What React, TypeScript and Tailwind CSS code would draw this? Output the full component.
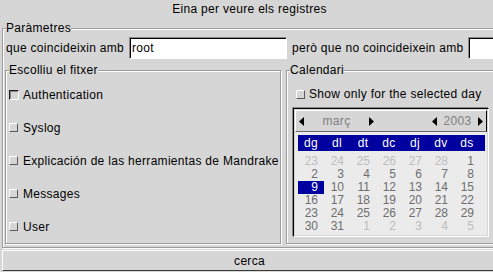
import React from 'react';

// Log viewer dialog: parameters, file choice and calendar

type Day = { n: number; other?: boolean };

const DAY_NAMES = ['dg', 'dl', 'dt', 'dc', 'dj', 'dv', 'ds'];

const range = (a: number, b: number, other = false): Day[] =>
  Array.from({ length: b - a + 1 }, (_, i) => ({ n: a + i, other }));

const WEEKS: Day[][] = [
  [...range(23, 28, true), ...range(1, 1)],
  range(2, 8),
  range(9, 15),
  range(16, 22),
  range(23, 29),
  [...range(30, 31), ...range(1, 5, true)],
];

const FILES = [
  { label: 'Authentication', on: true },
  { label: 'Syslog' },
  { label: 'Explicación de las herramientas de Mandrake' },
  { label: 'Messages' },
  { label: 'User' },
];

function Check({ on }: { on?: boolean }) {
  if (on) {
    return (
      <span className="block w-[10px] h-[10px] border border-t-[#1a1a1a] border-l-[#1a1a1a] border-b-white border-r-white bg-[#d6d6d6] shadow-[inset_1px_1px_0_#8a8a8a]" />
    );
  }
  return (
    <span className="block w-[9px] h-[9px] border border-t-white border-l-white border-b-[#5a5a5a] border-r-[#5a5a5a] bg-[#d6d6d6]" />
  );
}

function Arrow({ dir }: { dir: 'left' | 'right' }) {
  return (
    <svg width="5" height="9" viewBox="0 0 5 9" className="shrink-0">
      <polygon points={dir === 'left' ? '5,0 5,9 0,4.5' : '0,0 0,9 5,4.5'} fill="#000" />
    </svg>
  );
}

function Calendar() {
  return (
    <div className="w-[196px] h-[129px] p-px border border-t-black border-l-black border-b-white border-r-white shadow-[-1px_-1px_0_#8a8a8a] flex flex-col">
      {/* month / year bar */}
      <div className="h-[22px] shrink-0 flex items-center px-[3px] border border-t-white border-l-white border-b-[#6a6a6a] border-r-black">
        <Arrow dir="left" />
        <span className="w-[65px] text-center text-[#808080]">març</span>
        <Arrow dir="right" />
        <div className="flex-1" />
        <Arrow dir="left" />
        <span className="w-[41px] text-center text-[#808080]">2003</span>
        <Arrow dir="right" />
      </div>

      <div className="flex-1 bg-[#ebebeb] pt-[3px] pl-[3px] tracking-normal">
        <div className="w-[187px] h-[16px] bg-[#0000a0] text-white">
          <div className="grid grid-cols-[repeat(7,26px)] h-full items-center">
            {DAY_NAMES.map((d) => (
              <span key={d} className="text-center tracking-[0.3px]">{d}</span>
            ))}
          </div>
        </div>
        <div className="mt-[4px]">
          {WEEKS.map((week, w) => (
            <div key={w} className="grid grid-cols-[repeat(7,26px)]">
              {week.map((d, i) => {
                const selected = !d.other && d.n === 9;
                return (
                  <span
                    key={i}
                    className={
                      selected
                        ? 'h-[13px] leading-[13px] text-right pr-[6px] bg-[#0000a0] text-white'
                        : d.other
                        ? 'h-[13px] leading-[13px] text-right pr-[6px] text-[#bdbdbd]'
                        : 'h-[13px] leading-[13px] text-right pr-[6px] text-[#6e6e6e]'
                    }
                  >
                    {d.n}
                  </span>
                );
              })}
            </div>
          ))}
        </div>
      </div>
    </div>
  );
}

export default function App() {
  return (
    <div className="w-[493px] h-[272px] overflow-hidden bg-[#d6d6d6] text-black text-[12px] leading-[14px] tracking-[0.3px] font-['Liberation_Sans',Arial,sans-serif]">
      <div className="w-[500px] pl-[2px] pr-[3px]">
        <div className="h-[21px] pb-[3px] flex items-center justify-center">Eina per veure els registres</div>

        {/* PARAMETERS */}
        <fieldset className="min-w-0 px-[2px] pb-[3px] border border-[#9c9c9c] shadow-[inset_1px_1px_0_#fff,1px_1px_0_#fff]">
          <legend className="ml-[1px] leading-[14px] bg-[#d6d6d6]">Paràmetres</legend>

          <div className="flex items-center h-[22px] mt-[2px] pl-[1px]">
            <span className="w-[123px] shrink-0 whitespace-nowrap">que coincideixin amb</span>
            <input
              readOnly
              defaultValue="root"
              className="w-[158px] h-[22px] shrink-0 pl-[2px] bg-white outline-none border border-t-[#8a8a8a] border-l-[#8a8a8a] border-b-white border-r-white shadow-[inset_1px_1px_0_#000]"
            />
            <span className="ml-[5px] w-[176px] shrink-0 whitespace-nowrap">però que no coincideixein amb</span>
            <input
              readOnly
              defaultValue=""
              className="w-[158px] h-[22px] shrink-0 pl-[2px] bg-white outline-none border border-t-[#8a8a8a] border-l-[#8a8a8a] border-b-white border-r-white shadow-[inset_1px_1px_0_#000]"
            />
          </div>

          <div className="flex mt-[4px] gap-[5px]">
            {/* FILE CHOICE */}
            <fieldset className="w-[276px] shrink-0 min-w-0 pl-[3px] border border-[#9c9c9c] shadow-[inset_1px_1px_0_#fff,1px_1px_0_#fff]">
              <legend className="leading-[14px] bg-[#d6d6d6]">Escolliu el fitxer</legend>
              <div className="pt-px">
                {FILES.map((f) => (
                  <div key={f.label} className="h-[33px] flex items-center whitespace-nowrap">
                    <span className="w-[14px] shrink-0">
                      <Check on={f.on} />
                    </span>
                    {f.label}
                  </div>
                ))}
              </div>
            </fieldset>

            {/* CALENDAR */}
            <fieldset className="flex-1 min-w-0 pl-[6px] pb-[6px] border border-[#9c9c9c] shadow-[inset_1px_1px_0_#fff,1px_1px_0_#fff]">
              <legend className="ml-[-3px] leading-[14px] bg-[#d6d6d6]">Calendari</legend>
              <div className="pt-px">
                <div className="h-[30px] pt-[2px] pl-[3px] flex items-center whitespace-nowrap">
                  <span className="w-[13px] shrink-0">
                    <Check />
                  </span>
                  Show only for the selected day
                </div>
                <Calendar />
              </div>
            </fieldset>
          </div>
        </fieldset>

        <button className="mt-[2px] w-full h-[21px] flex items-center justify-center bg-[#d6d6d6] border border-t-white border-l-white border-b-[#3a3a3a] border-r-[#3a3a3a]">
          cerca
        </button>
      </div>
    </div>
  );
}
